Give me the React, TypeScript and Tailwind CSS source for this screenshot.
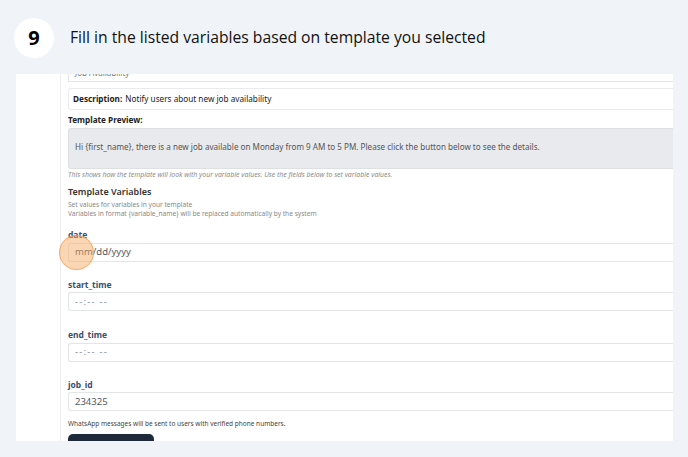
import React from "react";

const Field = ({ label, value, muted = true, className = "" }: { label: string; value: string; muted?: boolean; className?: string }) => (
  <div className={className}>
    <div className="text-[8.5px] font-bold text-[#3d4e6e] leading-none">{label}</div>
    <div className="mt-[3px] h-[19px] border border-r-0 border-[#e3e5e8] rounded-l-[3px] flex items-center pl-[6px]">
      <span className={`text-[9.5px] ${muted ? "text-[#8a8d93] tracking-[1.2px]" : "text-[#55585e]"}`}>{value}</span>
    </div>
  </div>
);

const App = () => {
  return (
    <div className="w-[688px] h-[457px] bg-[#f0f3f8] overflow-hidden" style={{ fontFamily: "'Open Sans', sans-serif" }}>
      <div className="flex items-center h-[74px] pl-[14px] pt-[2px]">
        <div className="w-[40px] h-[40px] rounded-full bg-white flex items-center justify-center text-[20px] font-bold text-black">9</div>
        <h1 className="ml-[16px] text-[15.7px] text-[#111]">Fill in the listed variables based on template you selected</h1>
      </div>

      <div className="ml-[16px] w-[657px] h-[367px] bg-white overflow-hidden flex" style={{ fontFamily: "'Noto Sans', sans-serif" }}>
        <div className="w-[45px] shrink-0 border-r border-[#eceef1]" />
        <div className="flex-1 pl-[7px]">
          <div className="-mt-[12px] h-[20px] border border-r-0 border-[#e3e5e8] flex items-end pl-[6px] pb-[2px]">
            <span className="text-[8px] text-[#777]">Job Availability</span>
          </div>

          <div className="mt-[6px] h-[22px] border border-r-0 border-[#e9ebee] rounded-l-[3px] flex items-center pl-[4px] text-[8.2px] text-[#222]">
            <span className="font-bold">Description:</span>
            <span className="ml-[3px]">Notify users about new job availability</span>
          </div>

          <div className="mt-[6px] text-[8.2px] font-bold text-[#222] leading-none">Template Preview:</div>
          <div className="mt-[4px] h-[41px] bg-[#e9eaee] border border-r-0 border-[#dedfe3] rounded-l-[3px] pl-[6px] pt-[3px]">
            <span className="text-[8.1px] text-[#555]">Hi {"{first_name}"}, there is a new job available on Monday from 9 AM to 5 PM. Please click the button below to see the details.</span>
          </div>
          <div className="mt-[1px] text-[6.9px] italic text-[#8c8c8c] leading-[10px]">This shows how the template will look with your variable values. Use the fields below to set variable values.</div>

          <div className="mt-[7px] text-[9px] font-semibold text-[#333] leading-none">Template Variables</div>
          <div className="mt-[4px] text-[6.6px] text-[#888] leading-[9px]">
            <div>Set values for variables in your template</div>
            <div>Variables in format {"{variable_name}"} will be replaced automatically by the system</div>
          </div>

          <div className="relative mt-[13px]">
            <Field label="date" value="mm/dd/yyyy" muted={false} />
            <div className="absolute left-[-9px] top-[3.5px] w-[35px] h-[35px] rounded-full bg-[#f6a35a]/45 border-[1.5px] border-[#f6a35a]/80" />
          </div>
          <Field label="start_time" value="--:-- --" className="mt-[19px]" />
          <Field label="end_time" value="--:-- --" className="mt-[20px]" />
          <Field label="job_id" value="234325" muted={false} className="mt-[19px]" />

          <div className="mt-[10px] text-[6.5px] text-[#444] leading-none">WhatsApp messages will be sent to users with verified phone numbers.</div>
          <div className="mt-[6px] w-[86px] h-[14px] rounded-[5px] bg-[#1e2a3a]" />
        </div>
      </div>
    </div>
  );
};

export default App;
